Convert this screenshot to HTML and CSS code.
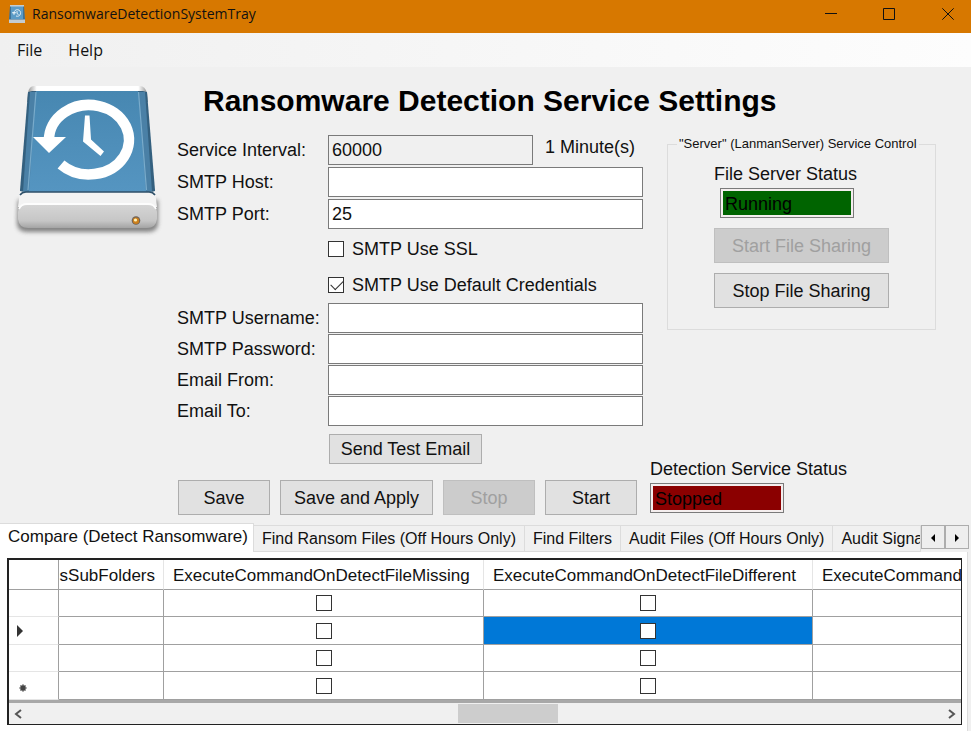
FILE: index.html
```html
<!DOCTYPE html>
<html lang="en">
<head>
<meta charset="utf-8">
<title>RansomwareDetectionSystemTray</title>
<link rel="stylesheet" href="styles.css">
</head>
<body>
<header class="titlebar">
  <svg class="app-icon" viewBox="0 0 16 18" aria-hidden="true">
    <path d="M1 1h14l1 13v3H0v-3z" fill="#3f7296"/>
    <path d="M2 1h12v13H2z" fill="#5b9bc6"/>
    <path d="M1 0h14v1.500H1zM0 14.500h16V18H0z" fill="#c3ccd2"/>
    <path d="M5 8a3.300 3.300 0 1 1 2 3M3.500 7.500h3L5 9.500zM8 6v2.500l1.500 1" fill="none" stroke="#e2eef5" stroke-width="1"/>
  </svg>
  <span class="window-title">RansomwareDetectionSystemTray</span>
  <div class="window-buttons">
    <button aria-label="Minimize"><svg viewBox="0 0 12 12"><path d="M0 5.500h12"/></svg></button>
    <button aria-label="Maximize"><svg viewBox="0 0 12 12"><path d="M.5.5h11v11H.5z"/></svg></button>
    <button aria-label="Close"><svg viewBox="0 0 12 12"><path d="M.3.3l11.400 11.400M11.700.3L.3 11.700"/></svg></button>
  </div>
</header>

<nav class="menubar">
  <button>File</button>
  <button>Help</button>
</nav>

<main class="settings">
  <svg class="drive" viewBox="13 13 150 156" aria-hidden="true">
    <defs>
      <linearGradient id="blue" x1="0" y1="0" x2="0" y2="1"><stop offset="0" stop-color="#4787b1"/><stop offset="1" stop-color="#5595c1"/></linearGradient>
      <linearGradient id="silver" x1="0" y1="0" x2="0" y2="1"><stop offset="0" stop-color="#d6d6d6"/><stop offset=".7" stop-color="#c6c6c6"/><stop offset="1" stop-color="#a4a4a4"/></linearGradient>
      <linearGradient id="rim" x1="0" y1="0" x2="1" y2="0"><stop offset="0" stop-color="#8d8d8d"/><stop offset=".08" stop-color="#fff"/><stop offset=".92" stop-color="#fff"/><stop offset="1" stop-color="#8d8d8d"/></linearGradient>
      <filter id="soft" x="-10%" y="-30%" width="120%" height="180%"><feGaussianBlur stdDeviation="2"/></filter>
    </defs>
    <path d="M18 130h140v24q-1 8-10 8H27q-9 0-10-8z" fill="#555" opacity=".7" filter="url(#soft)"/>
    <path d="M34 16h106q5 0 7 7l1 9H27l1-9q1-7 6-7z" fill="url(#rim)"/>
    <path d="M28 22l4-1h111l4 1 8 98v4H20v-4z" fill="#34607f"/>
    <path d="M30 22h115l7 100H23z" fill="#4a80a6"/>
    <path d="M36 21h102l8 101H29z" fill="url(#blue)"/>
    <path d="M36 22l-8 98M138.500 22l8 98" stroke="#79abcb" stroke-width="1.200" fill="none"/>
    <path d="M20 121q3 1 6 1h123q4 0 6-1l2 16H18z" fill="#f3f3f3"/>
    <path d="M20 125q2-3 6-3h123q4 0 6 3" fill="none" stroke="#2f5069" stroke-width="1.600"/>
    <path d="M18 142q1-8 8-8h123q7 0 8 8v7q-1 9-10 9H28q-9 0-10-9z" fill="url(#silver)"/>
    <path d="M19 139q2-5 8-5h121q6 0 8 5" fill="none" stroke="#fdfdfd" stroke-width="1.800"/>
    <path d="M49 70A40 34.700 0 1 1 61 94.500" fill="none" stroke="#fff" stroke-width="10.500"/>
    <path d="M33 67h33L49 83z" fill="#fff"/>
    <path d="M85 45.500h4.500l1.500 24 13 12-3.500 4.500L83 71.500z" fill="#fff"/>
    <circle cx="136" cy="150.500" r="4.300" fill="#6d6258"/>
    <circle cx="136" cy="150.700" r="3.200" fill="#cc7f1c"/>
    <circle cx="135.500" cy="150" r="1.600" fill="#fff3b8"/>
  </svg>

  <div class="content">
    <h1>Ransomware Detection Service Settings</h1>
    <div class="columns">
      <form class="form">
        <div class="row"><label for="interval">Service Interval:</label><input id="interval" class="short" type="text" value="60000" readonly><span class="hint">1 Minute(s)</span></div>
        <div class="row"><label for="host">SMTP Host:</label><input id="host" type="text"></div>
        <div class="row"><label for="port">SMTP Port:</label><input id="port" type="text" value="25"></div>
        <div class="check-row"><input id="ssl" class="check" type="checkbox"><label for="ssl">SMTP Use SSL</label></div>
        <div class="check-row"><input id="cred" class="check" type="checkbox" checked><label for="cred">SMTP Use Default Credentials</label></div>
        <div class="row tight"><label for="user">SMTP Username:</label><input id="user" type="text"></div>
        <div class="row tight"><label for="pass">SMTP Password:</label><input id="pass" type="password"></div>
        <div class="row tight"><label for="from">Email From:</label><input id="from" type="text"></div>
        <div class="row tight"><label for="to">Email To:</label><input id="to" type="text"></div>
        <button type="button" class="btn test">Send Test Email</button>
        <div class="actions">
          <button type="button" class="btn">Save</button>
          <button type="button" class="btn wide">Save and Apply</button>
          <button type="button" class="btn" disabled>Stop</button>
          <button type="button" class="btn">Start</button>
        </div>
      </form>

      <div class="side">
        <fieldset class="server">
          <legend>"Server" (LanmanServer) Service Control</legend>
          <label for="server-status">File Server Status</label>
          <input id="server-status" class="status running" type="text" value="Running" readonly>
          <button class="btn" disabled>Start File Sharing</button>
          <button class="btn">Stop File Sharing</button>
        </fieldset>
        <div class="detection">
          <label for="detection-status">Detection Service Status</label>
          <input id="detection-status" class="status stopped" type="text" value="Stopped" readonly>
        </div>
      </div>
    </div>
  </div>
</main>

<section class="tabs">
  <div class="tab-strip">
    <div class="tab-list" role="tablist">
      <button role="tab" aria-selected="true" class="tab selected">Compare (Detect Ransomware)</button>
      <button role="tab" class="tab">Find Ransom Files (Off Hours Only)</button>
      <button role="tab" class="tab">Find Filters</button>
      <button role="tab" class="tab">Audit Files (Off Hours Only)</button>
      <button role="tab" class="tab last">Audit Signa</button>
    </div>
    <div class="spinner">
      <button aria-label="Previous tabs"><svg viewBox="0 0 8 8"><path d="M6 0v8L2 4z"/></svg></button>
      <button aria-label="More tabs"><svg viewBox="0 0 8 8"><path d="M2 0v8l4-4z"/></svg></button>
    </div>
  </div>
  <div class="tab-page">
    <div class="grid-frame">
      <table class="grid">
        <colgroup><col class="c-head"><col class="c-sub"><col class="c-missing"><col class="c-different"><col></colgroup>
        <thead>
          <tr><th></th><th class="clipped"><span>sSubFolders</span></th><th>ExecuteCommandOnDetectFileMissing</th><th>ExecuteCommandOnDetectFileDifferent</th><th>ExecuteCommand</th></tr>
        </thead>
        <tbody>
          <tr><td></td><td></td><td><input class="check" type="checkbox" aria-label="File missing, row 1"></td><td><input class="check" type="checkbox" aria-label="File different, row 1"></td><td></td></tr>
          <tr><td class="marker"><svg viewBox="0 0 8 12"><path d="M1 0v12l6-6z"/></svg></td><td></td><td><input class="check" type="checkbox" aria-label="File missing, row 2"></td><td class="active"><input class="check" type="checkbox" aria-label="File different, row 2"></td><td></td></tr>
          <tr><td></td><td></td><td><input class="check" type="checkbox" aria-label="File missing, row 3"></td><td><input class="check" type="checkbox" aria-label="File different, row 3"></td><td></td></tr>
          <tr><td class="marker new"><svg viewBox="0 0 8 8"><path d="M4 .5v7M.5 4h7M1.500 1.500l5 5M6.500 1.500l-5 5" stroke="#444" stroke-width="1.600"/></svg></td><td></td><td><input class="check" type="checkbox" aria-label="File missing, new row"></td><td><input class="check" type="checkbox" aria-label="File different, new row"></td><td></td></tr>
        </tbody>
      </table>
      <div class="scrollbar">
        <button aria-label="Scroll left"><svg viewBox="0 0 8 10"><path d="M7 1L2 5l5 4"/></svg></button>
        <div class="track"><div class="thumb"></div></div>
        <button aria-label="Scroll right"><svg viewBox="0 0 8 10"><path d="M1 1l5 4-5 4"/></svg></button>
      </div>
    </div>
  </div>
</section>
</body>
</html>
```
FILE: styles.css
```css
* { box-sizing: border-box; }

body {
  margin: 0;
  min-height: 100vh;
  display: flex;
  flex-direction: column;
  background: #f0f0f0;
  color: #111;
  font: 18px/22px "Liberation Sans", Arial, sans-serif;
}

button, input { font: inherit; color: inherit; border-radius: 0; margin: 0; }
button { padding: 0; border: 0; background: none; white-space: nowrap; }
label { white-space: nowrap; }

/* Title bar and menu */
.titlebar {
  display: flex;
  align-items: center;
  height: 33px;
  padding: 0 0 5px 9px;
  background: #d77800;
  font: 14px/20px "Open Sans", "Noto Sans", sans-serif;
}
.app-icon { width: 16px; height: 18px; margin-right: 7px; }
.window-buttons { display: flex; margin-left: auto; }
.window-buttons button { width: 58px; height: 28px; display: flex; align-items: center; justify-content: center; }
.window-buttons button:last-child { width: 46px; margin-left: 7px; }
.window-buttons svg { width: 12px; height: 12px; fill: none; stroke: #111; stroke-width: 1; }

.menubar {
  display: flex;
  align-items: center;
  gap: 26px;
  height: 34px;
  padding: 0 17px;
  background: linear-gradient(90deg, #f0f0f0, #fdfdfd);
  font: 16px/22px "Open Sans", "Noto Sans", sans-serif;
}

/* Settings */
.settings { display: flex; padding: 16px 35px 8px 13px; }
.drive { flex: none; width: 150px; height: 156px; margin-right: 14px; }
.content { flex: 1; min-width: 0; }
h1 { margin: 1px 0 17px 26px; font-size: 30px; line-height: 34px; white-space: nowrap; color: #000; }
.columns { display: flex; }
.form { flex: none; width: 473px; }

.row { display: flex; align-items: center; height: 32px; padding-bottom: 2px; }
.row.tight { height: 31px; padding-bottom: 1px; }
.row label { flex: none; width: 151px; }
.row input { width: 315px; height: 30px; padding: 0 3px; border: 1px solid #7a7a7a; background: #fff; }
.row input.short { width: 205px; background: #f0f0f0; }
.hint { margin: 0 0 6px 12px; white-space: nowrap; }

.check-row { display: flex; align-items: center; gap: 8px; height: 36px; padding-left: 151px; }
.check {
  appearance: none;
  display: block;
  flex: none;
  width: 16px;
  height: 16px;
  border: 1px solid #333;
  background: #fff;
}
.check:checked::after {
  content: "";
  display: block;
  width: 11px;
  height: 6px;
  margin: 2px 0 0 2px;
  border: solid #333;
  border-width: 0 0 1px 1px;
  transform: rotate(-45deg);
}

.btn { height: 35px; width: 92px; border: 1px solid #adadad; background: #e1e1e1; }
.btn:disabled { border-color: #bfbfbf; background: #ccc; color: #a0a0a0; }
.btn.test { display: block; width: 153px; height: 30px; margin: 7px 0 16px 152px; }
.btn.wide { width: 153px; }
.actions { display: flex; gap: 10px; padding-left: 1px; }

.side { flex: 1; min-width: 0; display: flex; flex-direction: column; justify-content: space-between; }
.server {
  display: flex;
  flex-direction: column;
  min-width: 0;
  height: 195px;
  margin: 0 0 0 17px;
  padding: 10px 46px 0;
  border: 1px solid #dcdcdc;
}
.server legend { margin-left: -37px; padding: 0 2px; font-size: 13px; line-height: 18px; white-space: nowrap; }
.server .status { margin: 3px 0 10px 6px; }
.server .btn { width: 100%; margin-bottom: 10px; }

.status { display: block; width: 134px; height: 30px; padding: 2px 4px 0; border: 1px solid #7a7a7a; box-shadow: inset 0 0 0 2px #f4eeee; color: #000; }
.running { background: #006400; }
.stopped { background: #8b0000; }
.detection label { display: block; margin-bottom: 3px; }
.detection { padding-bottom: 2px; }

/* Tabs */
.tabs { flex: 1; display: flex; flex-direction: column; }
.tab-strip { display: flex; align-items: flex-end; height: 29px; font-size: 16px; line-height: 22px; }
.tab-list { flex: 1; min-width: 0; display: flex; align-items: flex-end; }
.tab { flex: none; height: 27px; padding: 0 8px; border: solid #dcdcdc; border-width: 1px 1px 1px 0; }
.tab.selected { height: 29px; padding: 0 5px 2px 8px; background: #fff; border-bottom: 0; font-size: 17px; }
.tab.last { flex: 1; min-width: 0; overflow: hidden; text-align: left; padding-right: 0; }
.spinner { display: flex; width: 48px; height: 24px; margin: 0 2px 3px 0; }
.spinner button { flex: 1; border: 1px solid #adadad; background: #eee; }
.spinner svg { width: 8px; height: 8px; fill: #000; }

.tab-page { flex: 1; margin-right: 3px; padding: 6px 5px 6px 7px; background: #fff; border-right: 1px solid #dcdcdc; }
.grid-frame { border: 2px solid #222; border-right-width: 1px; border-bottom-width: 1px; }

.grid { width: 100%; table-layout: fixed; border-collapse: separate; border-spacing: 0; font-size: 17px; line-height: 22px; border-bottom: 3px solid #a8a8a8; }
.c-head { width: 50px; }
.c-sub { width: 105px; }
.c-missing { width: 320px; }
.c-different { width: 329px; }
.grid th { height: 30px; padding: 2px 9px 0; font-weight: 400; text-align: left; white-space: nowrap; overflow: hidden; border-right: 1px solid #e5e5e5; border-bottom: 1px solid #a0a0a0; }
.grid th:first-child { border-right-color: #a0a0a0; }
.grid th:last-child { padding-right: 0; }
.grid th:last-child, .grid td:last-child { border-right: 0; }
.grid th.clipped { padding: 2px 8px 0 0; }
.clipped span { display: flex; justify-content: flex-end; overflow: hidden; }
.grid td { height: 27px; padding: 0; border-right: 1px solid #a0a0a0; border-bottom: 1px solid #a0a0a0; }
.grid tr:nth-child(even) td { height: 28px; }
.grid td:first-child { border-bottom-color: #e5e5e5; }
.grid td .check { margin: 0 auto; }
.grid td.active { background: #0078d7; }
.marker svg { display: block; width: 8px; height: 12px; margin-left: 7px; fill: #333; }
.marker.new svg { width: 8px; height: 8px; margin: 4px 0 0 10px; }

.scrollbar { display: flex; height: 21px; background: #f0f0f0; }
.scrollbar button { width: 18px; display: flex; align-items: center; justify-content: center; }
.scrollbar svg { width: 8px; height: 10px; fill: none; stroke: #555; stroke-width: 2; }
.track { flex: 1; padding: 1px 0; }
.thumb { width: 11%; height: 100%; margin-left: 47%; background: #cdcdcd; }
```
